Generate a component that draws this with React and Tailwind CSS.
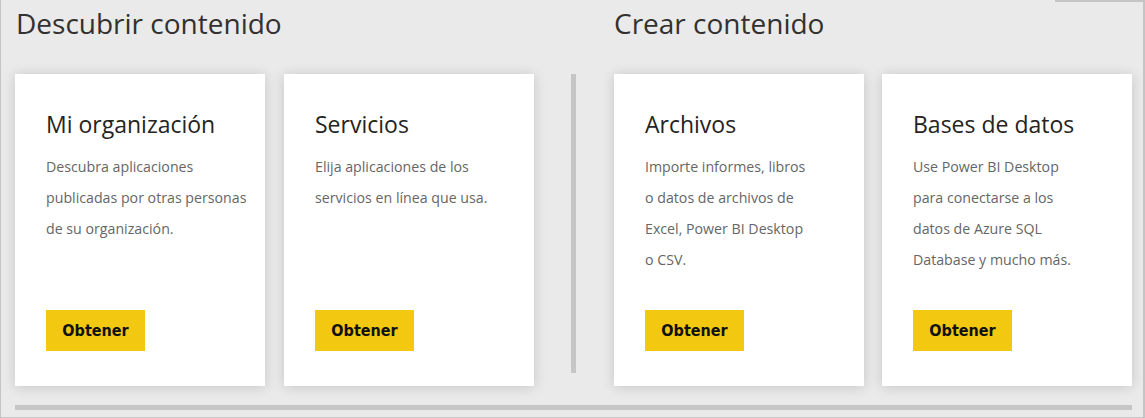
import React from "react";

const font = { fontFamily: "'Open Sans', 'Noto Sans', sans-serif" };

function Card({ title, lines }) {
  return (
    <div className="w-[250px] h-[312px] bg-white shadow-[0_1px_12px_rgba(0,0,0,0.16)] flex flex-col pl-[31px] pt-[34px] pb-[35px]">
      <div className="text-[23px] leading-[32px] text-[#252423] whitespace-nowrap">{title}</div>
      <div className="mt-[11px] text-[14.2px] leading-[31px] text-[#666666]">
        {lines.map((l, i) => (
          <div key={i} className="whitespace-nowrap">{l}</div>
        ))}
      </div>
      <button
        className="mt-auto w-[99px] h-[41px] bg-[#f2c811] text-[#111] font-bold text-[16px] flex items-center justify-center"
        style={{ fontFamily: "'DejaVu Sans Condensed', 'DejaVu Sans', sans-serif", fontStretch: "condensed" }}
      >
        Obtener
      </button>
    </div>
  );
}

export default function App() {
  return (
    <div className="w-[1145px] h-[418px] bg-[#eaeaea] border-l border-r-2 border-b border-[#c4c4c4] flex flex-col overflow-hidden" style={font}>
      <div className="flex justify-end h-[2px] shrink-0">
        <div className="w-[88px] h-[2px] bg-[#c4c4c4]" />
      </div>
      <div className="flex pl-[14px]">
        <div className="flex flex-col w-[519px]">
          <div className="h-[72px] pl-[1px] pt-[1px] text-[28px] leading-[40px] text-[#323130] whitespace-nowrap">Descubrir contenido</div>
          <div className="flex gap-[19px]">
            <Card title="Mi organización" lines={["Descubra aplicaciones", "publicadas por otras personas", "de su organización."]} />
            <Card title="Servicios" lines={["Elija aplicaciones de los", "servicios en línea que usa."]} />
          </div>
        </div>
        <div className="ml-[37px] mt-[72px] w-[5px] h-[299px] bg-[#c6c6c6]" />
        <div className="flex flex-col ml-[38px]">
          <div className="h-[72px] pt-[1px] text-[28px] leading-[40px] text-[#323130] whitespace-nowrap">Crear contenido</div>
          <div className="flex gap-[18px]">
            <Card title="Archivos" lines={["Importe informes, libros", "o datos de archivos de", "Excel, Power BI Desktop", "o CSV."]} />
            <Card title="Bases de datos" lines={["Use Power BI Desktop", "para conectarse a los", "datos de Azure SQL", "Database y mucho más."]} />
          </div>
        </div>
      </div>
      <div className="ml-[14px] mt-[19px] w-[1117px] h-[5px] bg-[#c6c6c6]" />
    </div>
  );
}
